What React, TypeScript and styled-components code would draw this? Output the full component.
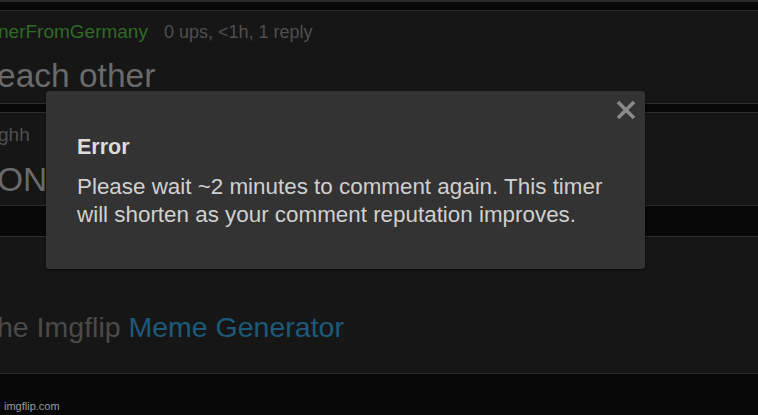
import styled, { createGlobalStyle } from "styled-components";

const GlobalStyle = createGlobalStyle`
  html, body {
    margin: 0;
    padding: 0;
    background: #080808;
    font-family: "Liberation Sans", Arial, sans-serif;
  }
`;

const Page = styled.div`
  position: relative;
  width: 758px;
  height: 415px;
  overflow: hidden;
  background: #080808;
  border-top: 2px solid #2a2a2a;
  box-sizing: border-box;
`;

const Panel = styled.div<{ $top: number; $height: number }>`
  margin-top: ${(p) => p.$top}px;
  height: ${(p) => p.$height}px;
  background: #161616;
  border-top: 1px solid #2c2c2c;
  border-bottom: 1px solid #2c2c2c;
  box-sizing: border-box;
  display: flex;
  flex-direction: column;
  overflow: hidden;
`;

const MetaRow = styled.div<{ $pad: number }>`
  display: flex;
  align-items: baseline;
  gap: 16px;
  padding-top: ${(p) => p.$pad}px;
  margin-left: -2px;
  line-height: 22px;
  white-space: nowrap;
`;

const UserName = styled.span<{ $color?: string }>`
  font-size: 19px;
  color: ${(p) => p.$color ?? "#2f6a26"};
`;

const Meta = styled.span`
  font-size: 18px;
  color: #4f4f4f;
`;

const CommentText = styled.div<{ $pad: number }>`
  padding-top: ${(p) => p.$pad}px;
  margin-left: -3px;
  font-size: 33.5px;
  line-height: 38px;
  color: #6a6a6a;
  white-space: nowrap;
`;

const PromoText = styled.div`
  padding-top: 74px;
  margin-left: -3px;
  font-size: 28.5px;
  line-height: 33px;
  color: #4a4a4a;
  white-space: nowrap;
`;

const PromoLink = styled.span`
  color: #1d5a7a;
`;

const Watermark = styled.div`
  position: absolute;
  left: 4px;
  bottom: 3px;
  font-size: 11px;
  color: #9a9a9a;
`;

const Modal = styled.div`
  position: absolute;
  left: 46px;
  top: 89px;
  width: 599px;
  height: 178px;
  background: #333333;
  border-radius: 3px;
  box-sizing: border-box;
  padding: 46px 30px 0 31px;
  box-shadow: 0 1px 3px rgba(0, 0, 0, 0.5);
`;

const CloseButton = styled.button`
  position: absolute;
  top: 8px;
  right: 8px;
  width: 22px;
  height: 22px;
  padding: 0;
  border: none;
  background: none;
  display: flex;
  align-items: center;
  justify-content: center;
  cursor: pointer;
`;

const Title = styled.div`
  font-size: 21.5px;
  font-weight: bold;
  color: #dcdcdc;
  line-height: 21.5px;
`;

const Message = styled.div`
  margin-top: 14px;
  font-size: 22.4px;
  line-height: 28px;
  color: #d0d0d0;
  white-space: nowrap;
`;

const App = () => {
  return (
    <>
      <GlobalStyle />
      <Page>
        <Panel $top={8} $height={94}>
          <MetaRow $pad={10}>
            <UserName>nerFromGermany</UserName>
            <Meta>0 ups, &lt;1h, 1 reply</Meta>
          </MetaRow>
          <CommentText $pad={14}>each other</CommentText>
        </Panel>
        <Panel $top={8} $height={94}>
          <MetaRow $pad={11}>
            <UserName $color="#4f4f4f">ghh</UserName>
          </MetaRow>
          <CommentText $pad={15}>ONG</CommentText>
        </Panel>
        <Panel $top={30} $height={138}>
          <PromoText>
            he Imgflip <PromoLink>Meme Generator</PromoLink>
          </PromoText>
        </Panel>
        <Watermark>imgflip.com</Watermark>
        <Modal>
          <CloseButton aria-label="Close">
            <svg width="20" height="20" viewBox="0 0 20 20">
              <path
                d="M2 2 L18 18 M18 2 L2 18"
                stroke="#8a8a8a"
                strokeWidth="3.6"
                strokeLinecap="butt"
              />
            </svg>
          </CloseButton>
          <Title>Error</Title>
          <Message>
            Please wait ~2 minutes to comment again. This timer
            <br />
            will shorten as your comment reputation improves.
          </Message>
        </Modal>
      </Page>
    </>
  );
};

export default App;
